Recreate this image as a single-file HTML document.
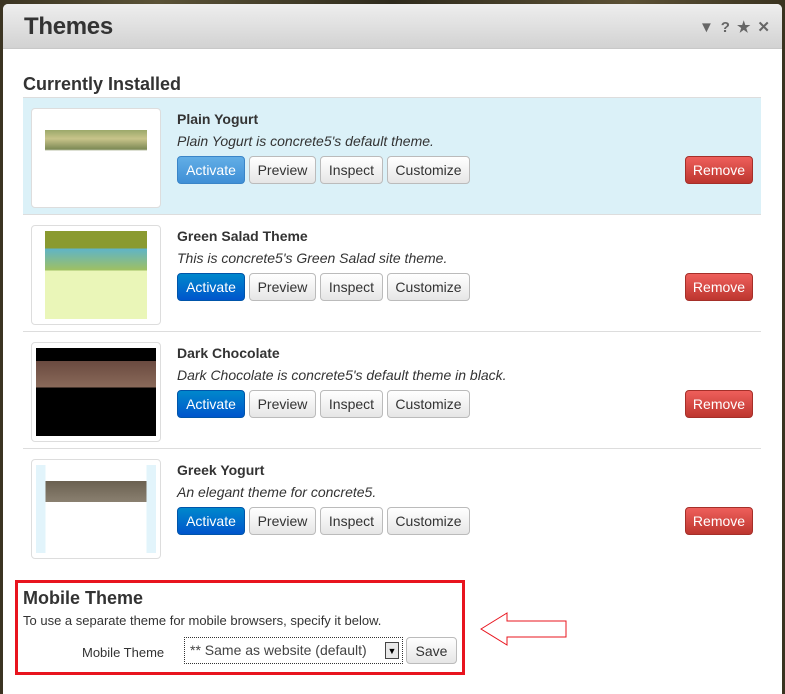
<!DOCTYPE html>
<html><head><style>
*{box-sizing:border-box;margin:0;padding:0}
body{width:785px;height:682px;overflow:hidden;font-family:"Liberation Sans",Arial,sans-serif;background:linear-gradient(90deg,#3b3422,#5a5236 20%,#2e2a1c 50%,#5b5034 80%,#3a3320);position:relative}
.dlg{position:absolute;left:3px;top:4px;width:779px;height:690px;background:#fff;border-radius:5px 5px 0 0;overflow:hidden}
.hdr{height:45px;background:linear-gradient(#eeeeee,#d2d2d2);border-bottom:1px solid #c8c8c8;position:relative}
.hdr h1{position:absolute;left:21px;top:9px;font-size:24px;font-weight:bold;color:#333;letter-spacing:-0.3px}
.icons{position:absolute;right:12px;top:14px;font-size:15px;color:#666;font-weight:bold}
.icons span{margin-left:7px}
h2{position:absolute;left:20px;top:70px;font-size:18px;font-weight:bold;color:#333}
.row{position:absolute;left:20px;width:738px;height:117px;border-top:1px solid #ddd}
.row.sel{background:#dbf1f8}
.th{position:absolute;left:8px;top:10px;width:130px;height:100px;border:1px solid #ddd;border-radius:4px;background:#fff;padding:5px 13px}
.th div{width:100%;height:100%}
.name{position:absolute;left:154px;top:13px;font-size:14px;font-weight:bold;color:#333}
.desc{position:absolute;left:154px;top:35px;font-size:14px;font-style:italic;color:#333}
.b{position:absolute;top:58px;height:28px;border:1px solid #bbb;border-radius:4px;background:linear-gradient(#fff,#e6e6e6);font-size:14px;color:#333;text-align:center;line-height:26px}
.act{background:linear-gradient(#0088cc,#0055cc);color:#fff;border-color:#0055aa}
.sel .act{background:linear-gradient(#62aee6,#3f8fd6);border-color:#3a85c8}
.rem{background:linear-gradient(#ee5f5b,#bd362f);color:#fff;border-color:#a52f29}
.mob{position:absolute;left:15px;top:580px;width:450px;height:95px;border:3px solid #e8141e;background:#fff}
.mob h3{position:absolute;left:5px;top:5px;font-size:18px;font-weight:bold;color:#333}
.mob p{position:absolute;left:5px;top:30px;font-size:13px;color:#333}
</style></head><body>
<div class="dlg">
<div class="hdr"><h1>Themes</h1><div class="icons"><span>▼</span><span>?</span><span>★</span><span>✕</span></div></div>
<h2>Currently Installed</h2>

<div class="row sel" style="top:93px">
<div class="th"><div style="background:linear-gradient(#fff 0,#fff 18%,#9aa86a 18%,#c8c48a 28%,#7d8a56 40%,#fff 42%,#fff 100%)"></div></div>
<div class="name">Plain Yogurt</div><div class="desc">Plain Yogurt is concrete5's default theme.</div>
<div class="b act" style="left:154px;width:68px">Activate</div><div class="b" style="left:226px;width:67px">Preview</div><div class="b" style="left:297px;width:63px">Inspect</div><div class="b" style="left:364px;width:83px">Customize</div><div class="b rem" style="left:662px;width:68px">Remove</div>
</div>

<div class="row" style="top:210px">
<div class="th"><div style="background:linear-gradient(#8a9a30 0,#8a9a30 20%,#5fb4c8 20%,#a0c060 45%,#eaf6b8 45%,#eaf6b8 100%)"></div></div>
<div class="name">Green Salad Theme</div><div class="desc">This is concrete5's Green Salad site theme.</div>
<div class="b act" style="left:154px;width:68px">Activate</div><div class="b" style="left:226px;width:67px">Preview</div><div class="b" style="left:297px;width:63px">Inspect</div><div class="b" style="left:364px;width:83px">Customize</div><div class="b rem" style="left:662px;width:68px">Remove</div>
</div>

<div class="row" style="top:327px">
<div class="th" style="padding:5px 4px"><div style="background:linear-gradient(#000 0,#000 15%,#6a4a40 15%,#8a6a5a 45%,#000 45%,#000 100%)"></div></div>
<div class="name">Dark Chocolate</div><div class="desc">Dark Chocolate is concrete5's default theme in black.</div>
<div class="b act" style="left:154px;width:68px">Activate</div><div class="b" style="left:226px;width:67px">Preview</div><div class="b" style="left:297px;width:63px">Inspect</div><div class="b" style="left:364px;width:83px">Customize</div><div class="b rem" style="left:662px;width:68px">Remove</div>
</div>

<div class="row" style="top:444px">
<div class="th" style="padding:5px 4px"><div style="background:linear-gradient(90deg,#e2f4fb 0,#e2f4fb 8%,transparent 8%,transparent 92%,#e2f4fb 92%),linear-gradient(#fff 0,#fff 18%,#6a6050 18%,#8a8070 42%,#fff 42%,#fff 100%)"></div></div>
<div class="name">Greek Yogurt</div><div class="desc">An elegant theme for concrete5.</div>
<div class="b act" style="left:154px;width:68px">Activate</div><div class="b" style="left:226px;width:67px">Preview</div><div class="b" style="left:297px;width:63px">Inspect</div><div class="b" style="left:364px;width:83px">Customize</div><div class="b rem" style="left:662px;width:68px">Remove</div>
</div>
</div>

<div class="mob"><h3>Mobile Theme</h3><p>To use a separate theme for mobile browsers, specify it below.</p>
<div style="position:absolute;left:64px;top:62px;font-size:13px;color:#333">Mobile Theme</div>
<div style="position:absolute;left:166px;top:54px;width:219px;height:27px;border:1px dotted #333;font-size:14px;color:#444;line-height:25px;padding-left:5px">** Same as website (default)<div style="position:absolute;right:3px;top:4px;width:14px;height:17px;border:1px solid #444;background:#e8e8e8;font-size:9px;line-height:16px;text-align:center;color:#000">▼</div></div>
<div class="b" style="left:388px;top:54px;width:51px;height:27px">Save</div>
</div>

<svg style="position:absolute;left:480px;top:612px" width="88" height="36"><path d="M1 17 L27 1 L27 9 L86 9 L86 25 L27 25 L27 33 Z" fill="#fff" stroke="#e8141e" stroke-width="1"/></svg>
</body></html>
